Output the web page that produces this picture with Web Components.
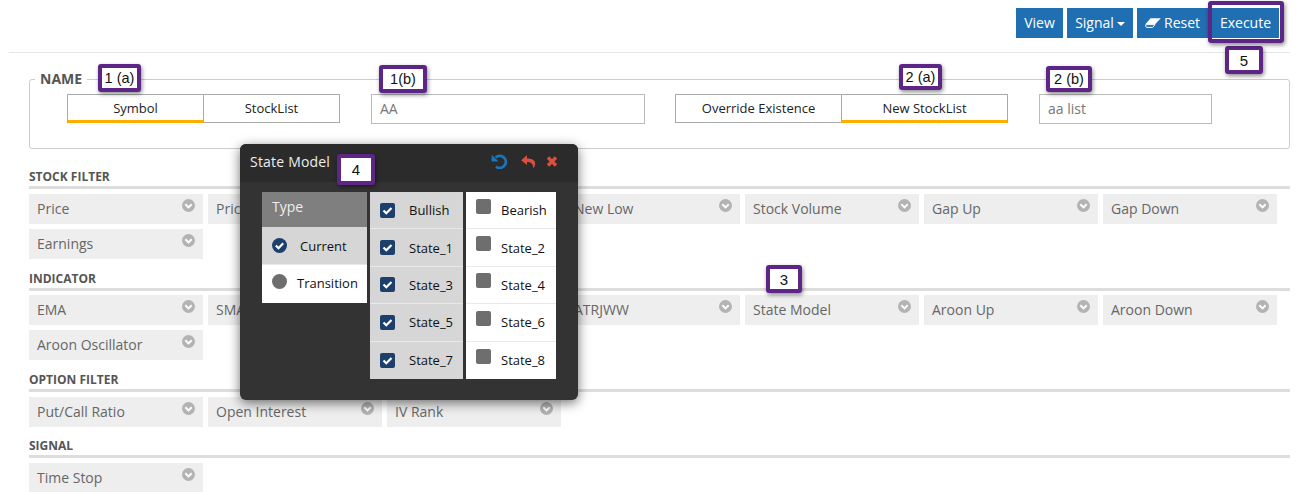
<!DOCTYPE html>
<html><head><meta charset="utf-8"><style>
html,body{margin:0;padding:0;background:#fff;font-family:"Open Sans",sans-serif;color:#555}
body{position:relative;width:1301px;height:492px;overflow:hidden}
</style></head><body>
<app-toolbar></app-toolbar>
<main-form>
  <name-panel></name-panel>
  <filter-section title="STOCK FILTER" items="Price|Price|&nbsp;|New Low|Stock Volume|Gap Up|Gap Down|Earnings"></filter-section>
  <filter-section style="--line-gap:4px" title="INDICATOR" items="EMA|SMA|&nbsp;|ATRJWW|State Model|Aroon Up|Aroon Down|Aroon Oscillator"></filter-section>
  <filter-section title="OPTION FILTER" items="Put/Call Ratio|Open Interest|IV Rank"></filter-section>
  <filter-section style="margin-top:10px" title="SIGNAL" items="Time Stop"></filter-section>
</main-form>
<state-modal></state-modal>
<call-out x="98" y="64" w="43" h="28">1 (a)</call-out>
<call-out x="379" y="65" w="48" h="28">1(b)</call-out>
<call-out x="899" y="64" w="43" h="26">2 (a)</call-out>
<call-out x="1046" y="66" w="46" h="26">2 (b)</call-out>
<call-out x="766" y="265" w="36" h="28" big>3</call-out>
<call-out x="337" y="154" w="38" h="31" big>4</call-out>
<call-out x="1225" y="46" w="38" h="28" big>5</call-out>
<call-out x="1208" y="1" w="76" h="42" hollow></call-out>
<script>
function def(name, html){
  customElements.define(name, class extends HTMLElement{
    connectedCallback(){
      if(this.shadowRoot) return;
      const r=this.attachShadow({mode:'open'});
      r.innerHTML=typeof html==='function'?html(this):html;
    }
  });
}
def('app-toolbar',`<style>
:host{display:flex;justify-content:flex-end;box-sizing:border-box;height:53px;margin:0 11px 0 9px;padding:8px 11px 0 0;border-bottom:1px solid #e6e6e6;font-family:"Open Sans",sans-serif}
.b{box-sizing:border-box;height:30px;background:#1f6fb2;color:#fff;font-size:14px;line-height:30px;text-align:center;margin-left:4px;white-space:nowrap;display:flex;align-items:center;justify-content:center}
.c{display:inline-block;width:0;height:0;border-left:4px solid transparent;border-right:4px solid transparent;border-top:4px solid #fff;margin-left:3px;margin-top:2px}
svg{margin-right:3px}
</style>
<div class="b" style="width:47px">View</div>
<div class="b" style="width:66px">Signal<span class="c"></span></div>
<div class="b" style="width:73px;padding-right:2px"><svg width="16" height="10" viewBox="0 0 16 10"><path d="M5.6 0.2 H15.8 L10.4 6 H0.6 Z" fill="#fff"/><path d="M0.8 6.6 H10 L7.6 9.4 H1.6 L0.6 8 Z" fill="none" stroke="#fff" stroke-width="1"/></svg>Reset</div>
<div class="b" style="width:67px;margin-left:2px">Execute</div>`);
def('main-form',`<style>:host{display:block;margin:0 11px 0 29px;padding-top:17px}</style><slot></slot>`);
def('seg-toggle',t=>{
  const its=t.getAttribute('items').split('|'),a=+t.getAttribute('active');
  return `<style>
:host{display:flex;box-sizing:border-box;height:29px;border:1px solid #aaa;font-size:13px;color:#222;font-family:"Open Sans",sans-serif}
div{flex:1 1 0;text-align:center;line-height:26px;box-sizing:border-box;height:27px}
div+div{border-left:1px solid #aaa}
.on{border-bottom:3px solid #ffae00;height:28px;margin-bottom:-1px}
</style>`+its.map((x,i)=>`<div class="${i==a?'on':''}">${x}</div>`).join('');
});
def('text-box',`<style>:host{display:block;box-sizing:border-box;height:30px;border:1px solid #bbb;padding:0 8px;font-size:14px;line-height:28px;color:#777;font-family:"Open Sans",sans-serif}</style><slot></slot>`);
def('name-panel',`<style>
:host{display:block;margin-bottom:19px;font-family:"Open Sans",sans-serif}
fieldset{margin:0;box-sizing:border-box;height:79px;border:1px solid #ccc;border-radius:3px;padding:0 0 0 37px;position:relative}
legend{font-size:14px;font-weight:700;color:#555;padding:0 5px;margin-left:-32px;line-height:18px;height:18px}
.row{display:flex;margin-top:6px}
</style>
<fieldset><legend>NAME</legend><div class="row">
<seg-toggle items="Symbol|StockList" active="0" style="width:273px"></seg-toggle>
<text-box style="width:274px;margin-left:31px">AA</text-box>
<seg-toggle items="Override Existence|New StockList" active="1" style="width:333px;margin-left:30px"></seg-toggle>
<text-box style="width:173px;margin-left:31px">aa list</text-box>
</div></fieldset>`);
def('filter-chip',`<style>
:host{display:block;position:relative;box-sizing:border-box;width:174px;height:30px;background:#eee;padding:0 8px;font-size:14px;line-height:30px;color:#666;white-space:nowrap;font-family:"Open Sans",sans-serif}
svg{position:absolute;right:8px;top:5px}
</style><slot></slot><svg width="13" height="13" viewBox="0 0 13 13"><circle cx="6.5" cy="6.5" r="6.5" fill="#b3b3b3"/><path d="M3.3 5.2 L6.5 8.4 L9.7 5.2" fill="none" stroke="#fff" stroke-width="2"/></svg>`);
def('filter-section',t=>{
  const its=t.getAttribute('items').split('|');
  return `<style>
:host{display:block;margin-top:11px;font-family:"Open Sans",sans-serif}
h3{margin:0;font-size:12px;font-weight:700;line-height:18px;height:18px;color:#555}
.l{height:3px;background:#ddd;margin-bottom:var(--line-gap,5px)}
.g{display:flex;flex-wrap:wrap;gap:5px}
</style><h3>${t.getAttribute('title')}</h3><div class="l"></div><div class="g">`+its.map(x=>`<filter-chip>${x}</filter-chip>`).join('')+`</div>`;
});
const CHK='<svg width="15" height="15" viewBox="0 0 15 15"><rect width="15" height="15" rx="2" fill="#1c3f6b"/><path d="M3.5 7.5 L6.3 10.3 L11.5 5" fill="none" stroke="#fff" stroke-width="2.2"/></svg>';
const UN='<svg class="u" width="15" height="15" viewBox="0 0 15 15"><rect width="15" height="15" rx="2" fill="#6e6e6e"/></svg>';
def('state-modal',`<style>
:host{position:absolute;left:240px;top:144px;width:338px;height:256px;background:#333;border-radius:6px;box-shadow:0 3px 12px rgba(0,0,0,.55);font-family:"Open Sans",sans-serif;overflow:hidden;display:block}
.h{box-sizing:border-box;height:38px;background:#2b2b2b;display:flex;align-items:center;padding:0 20px 3px 10px;color:#eee;font-size:14px;letter-spacing:.2px}
.h span{flex:1}
.h svg{display:block}
.b{display:flex;padding:10px 22px 0 22px;font-size:13px;color:#111}
.col{display:flex;flex-direction:column}
.t{width:105px;margin-right:3px}
.th{height:35px;background:#7f7f7f;color:#eee;font-size:14px;line-height:30px;padding-left:10px;box-sizing:border-box}
.tr{display:flex;align-items:center;box-sizing:border-box}
.tr svg{margin-left:10px}
.on{background:#d6d6d6}
.off{background:#fff}
.c1{width:93px;margin-right:3px}
.c2{width:90px}
.r{height:37.4px;display:flex;align-items:center;box-sizing:border-box;border-bottom:1px solid #e8e8e8}
.r:last-child{border-bottom:0}
.c1 .r svg{margin-left:10px;margin-right:14px}
.c2 .r svg{margin-left:10px;margin-right:10px;position:relative;top:-4px}
</style>
<div class="h"><span>State Model</span>
<svg width="17" height="15" viewBox="0 0 17 15" style="margin-right:13px"><path d="M4.6 3.6 A6 6 0 1 1 5 12.6" fill="none" stroke="#1a75bb" stroke-width="2.8"/><path d="M0.6 0.8 L7.6 7.4 H0.6 Z" fill="#1a75bb"/></svg>
<svg width="15" height="14" viewBox="0 0 15 14" style="margin-right:10px"><path d="M6 0.3 L0.2 5.2 L6 10 V7 C10 7 12.2 8.6 12.4 13.8 C15.6 8.6 15 3.4 6 3.4 Z" fill="#d9503f"/></svg>
<svg width="12" height="11" viewBox="0 0 12 11"><path d="M2 1.5 L10 9.5 M10 1.5 L2 9.5" stroke="#d9503f" stroke-width="3.4"/></svg></div>
<div class="b">
<div class="col t"><div class="th">Type</div>
<div class="tr on" style="height:38px;border-bottom:1px solid #e8e8e8"><svg width="15" height="15" viewBox="0 0 15 15"><circle cx="7.5" cy="7.5" r="7.5" fill="#1c3f6b"/><path d="M3.8 7.5 L6.5 10.2 L11.2 5.3" fill="none" stroke="#fff" stroke-width="2.2"/></svg><span style="margin-left:13px">Current</span></div>
<div class="tr off" style="height:37.5px;padding-bottom:1.5px"><svg width="15" height="15" viewBox="0 0 15 15" style="margin-top:-4px"><circle cx="7.5" cy="7.5" r="7.5" fill="#6e6e6e"/></svg><span style="margin-left:10px">Transition</span></div></div>
<div class="col c1">
<div class="r on">${CHK}Bullish</div><div class="r on">${CHK}State_1</div><div class="r on">${CHK}State_3</div><div class="r on">${CHK}State_5</div><div class="r on">${CHK}State_7</div></div>
<div class="col c2">
<div class="r off">${UN}Bearish</div><div class="r off">${UN}State_2</div><div class="r off">${UN}State_4</div><div class="r off">${UN}State_6</div><div class="r off">${UN}State_8</div></div>
</div>`);
def('call-out',t=>{
  const g=n=>t.getAttribute(n),h=t.hasAttribute('hollow'),b=t.hasAttribute('big');
  return `<style>
:host{position:absolute;left:${g('x')}px;top:${g('y')}px;width:${g('w')}px;height:${g('h')}px;box-sizing:border-box;border:4px solid #5c2586;border-radius:3px;background:${h?'transparent':'#fff'};box-shadow:1px 2px 4px rgba(0,0,0,.45);font:${b?15:14.5}px/1 "Liberation Sans",sans-serif;color:#111;display:flex;align-items:center;justify-content:center;white-space:nowrap}
</style><slot></slot>`;
});
</script>
</body></html>
